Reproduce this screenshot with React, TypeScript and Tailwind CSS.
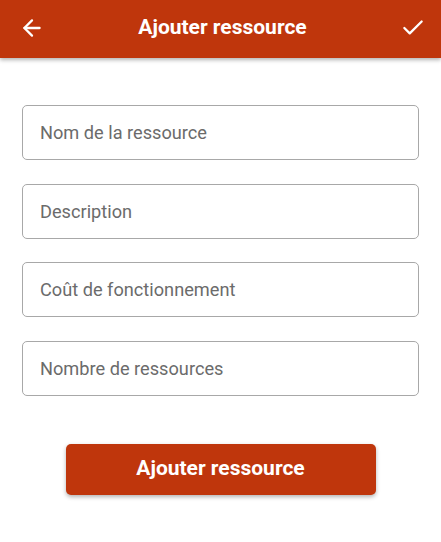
import { ArrowLeft, Check } from 'lucide-react';

const fields = ['Nom de la ressource', 'Description', 'Coût de fonctionnement', 'Nombre de ressources'];

export default function App() {
  return (
    <div className="w-[441px] h-[542px] bg-white font-['Roboto',sans-serif]">
      <header className="h-[58px] bg-[#bf360c] flex items-center justify-between pl-[19px] pr-[15px] pb-[3px] shadow-[0_2px_4px_rgba(0,0,0,0.3)]">
        <ArrowLeft className="w-[26px] h-[26px] text-white" strokeWidth={2.1} />
        <h1 className="text-white text-[21px] font-bold">Ajouter ressource</h1>
        <Check className="w-[26px] h-[26px] text-white" strokeWidth={2.1} />
      </header>

      <div className="px-[22px] pt-[47px] flex flex-col gap-[23.5px]">
        {fields.map((f) => (
          <input
            key={f}
            type="text"
            placeholder={f}
            className="h-[55px] w-full border border-[#a8a8a8] rounded-[5px] px-[17px] text-[18.2px] text-[#333] placeholder:text-[#6b6b6b] outline-none"
          />
        ))}
      </div>

      <div className="flex justify-center pt-[48px]">
        <button className="w-[310px] h-[51px] bg-[#bf360c] rounded-[5px] text-white text-[21px] font-bold shadow-[0_2px_4px_rgba(0,0,0,0.3)]">
          Ajouter ressource
        </button>
      </div>
    </div>
  );
}
